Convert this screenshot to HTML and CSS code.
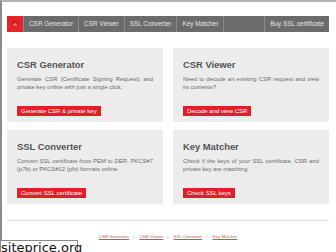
FILE: index.html
```html
<!DOCTYPE html>
<html lang="en">
<head>
    <meta charset="UTF-8">
    <meta name="viewport" content="width=device-width, initial-scale=1.0">
    <title>SSL Tools</title>
    <link rel="stylesheet" href="styles.css">
</head>
<body>
    <div class="page">
        <div class="nav">
            <a class="home" href="#">
                <svg width="8" height="8" viewBox="0 0 8 8"><circle cx="4" cy="4" r="3" fill="#c8141c"/><path d="M2 4.3 L4 2.4 L6 4.3 V6 H2 Z" fill="#f06a6f"/></svg>
            </a>
            <a class="navlink" href="#">CSR Generator</a>
            <a class="navlink" href="#">CSR Viewer</a>
            <a class="navlink" href="#">SSL Converter</a>
            <a class="navlink" href="#">Key Matcher</a>
            <span class="spacer"></span>
            <a class="navlink" href="#">Buy SSL certificate</a>
        </div>

        <div class="grid">
            <div class="card">
                <h2>CSR Generator</h2>
                <p>Generate CSR (Certificate Signing Request) and private key online with just a single click.</p>
                <a class="btn" href="#">Generate CSR &amp; private key</a>
            </div>
            <div class="card">
                <h2>CSR Viewer</h2>
                <p>Need to decode an existing CSR request and view its contents?</p>
                <a class="btn" href="#">Decode and view CSR</a>
            </div>
            <div class="card">
                <h2>SSL Converter</h2>
                <p>Convert SSL certificate from PEM to DER, PKCS#7 (p7b) or PKCS#12 (pfx) formats online.</p>
                <a class="btn" href="#">Convert SSL certificate</a>
            </div>
            <div class="card">
                <h2>Key Matcher</h2>
                <p>Check if the keys of your SSL certificate, CSR and private key are matching.</p>
                <a class="btn" href="#">Check SSL keys</a>
            </div>
        </div>

        <div class="footer">
            <a href="#">CSR Generator</a><span class="sep">|</span>
            <a href="#">CSR Viewer</a><span class="sep">|</span>
            <a href="#">SSL Converter</a><span class="sep">|</span>
            <a href="#">Key Matcher</a>
        </div>
    </div>

    <div class="watermark">siteprice.org</div>
</body>
</html>
```

FILE: styles.css
```css
body {
margin: 0;
font-family: "Liberation Sans", Arial, sans-serif;
background-color: #fff;
}

/* page frame */
.page {
height: 238px;
border-top: 2px solid #b4b4b4;
border-left: 2px solid #8c8c8c;
padding: 14px 7px 0 5px;
}

/* top menu */
.nav {
display: flex;
height: 16px;
background-color: #6b6b6b;
}

.nav a {
text-decoration: none;
}

.home {
width: 16px;
display: flex;
align-items: center;
justify-content: center;
background-color: #e8222b;
}

.navlink {
color: #e4e4e4;
font-size: 6.4px;
line-height: 16px;
padding: 0 5px;
border-left: 1px solid #8a8a8a;
}

.spacer {
flex: 1;
border-left: 1px solid #8a8a8a;
}

/* tool boxes */
.grid {
display: grid;
grid-template-columns: 1fr 1fr;
gap: 8px 10px;
margin-top: 16px;
}

.card {
height: 74px;
box-sizing: border-box;
padding: 11px 10px 0 10px;
background-color: #ececec;
}

.card h2 {
margin: 0 0 4px 0;
font-size: 9.4px;
line-height: 12px;
color: #555;
}

.card p {
margin: 0 0 8px 0;
font-size: 5.9px;
line-height: 8px;
color: #6a6a6a;
text-align: justify;
}

.btn {
display: inline-block;
height: 10px;
line-height: 10px;
padding: 0 4px;
font-size: 6px;
color: #fff;
text-decoration: none;
background-color: #e31e27;
}

/* footer */
.footer {
margin-top: 16px;
padding-top: 13px;
border-top: 1px solid #dcdcdc;
text-align: center;
font-size: 4.4px;
}

.footer a {
color: #b45a5a;
}

.footer .sep {
color: #aaa;
margin: 0 4px;
}

.watermark {
position: absolute;
left: 0;
top: 240px;
width: 76px;
height: 12px;
background-color: #fff;
border: 1px solid #888;
font-family: "DejaVu Sans", sans-serif;
font-size: 13px;
line-height: 14px;
color: #111;
white-space: nowrap;
}
```
